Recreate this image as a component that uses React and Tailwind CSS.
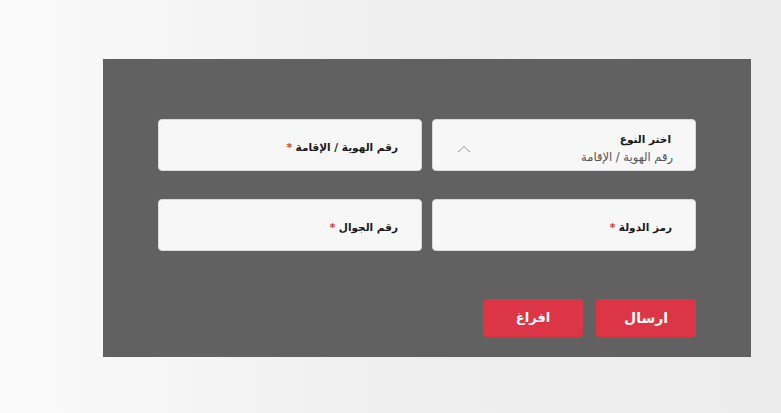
import React from "react";

const font = { fontFamily: '"DejaVu Sans", "Noto Sans", sans-serif' };

function Field({ label }) {
  return (
    <div className="h-[52px] bg-[#f7f7f7] border border-[#d9d9d9] rounded-[4px] flex items-center pr-[23px] pt-[5px]">
      <span className="text-[10.5px] font-bold text-[#1a1a1a]">
        {label} <span className="text-[#e3342f]">*</span>
      </span>
    </div>
  );
}

export default function App() {
  return (
    <div
      className="w-[781px] h-[413px] overflow-hidden bg-gradient-to-r from-[#fafafa] via-[#efefef] to-[#ececec] pt-[59px] pl-[103px]"
      style={font}
    >
      <div dir="rtl" className="w-[648px] h-[298px] bg-[#616161] px-[55px] pt-[60px]">
        <div className="grid grid-cols-2 gap-x-[10px] gap-y-[28px]">
          <div className="h-[52px] bg-[#f7f7f7] border border-[#d9d9d9] rounded-[4px] flex items-stretch pr-[22px] pl-[24px] pt-[6px]">
            <div className="flex-1 flex flex-col justify-center">
              <span className="text-[10.5px] font-bold text-[#1a1a1a] leading-[16px] pr-[2px]">اختر النوع</span>
              <span className="text-[11.5px] text-[#555] leading-[17px] mt-[2px]">رقم الهوية / الإقامة</span>
            </div>
            <div className="flex items-center">
              <svg width="14" height="8" viewBox="0 0 14 8" className="mt-[2px]">
                <path d="M1 7 L7 1.5 L13 7" fill="none" stroke="#9a9a9a" strokeWidth="1" />
              </svg>
            </div>
          </div>
          <Field label="رقم الهوية / الإقامة" />
          <Field label="رمز الدولة" />
          <Field label="رقم الجوال" />
        </div>
        <div className="flex gap-[13px] mt-[48px]">
          <button className="w-[100px] h-[38px] bg-[#dc3545] rounded-[4px] text-white font-bold text-[14px]">ارسال</button>
          <button className="w-[100px] h-[38px] bg-[#dc3545] rounded-[4px] text-white font-bold text-[13px]">افراغ</button>
        </div>
      </div>
    </div>
  );
}
